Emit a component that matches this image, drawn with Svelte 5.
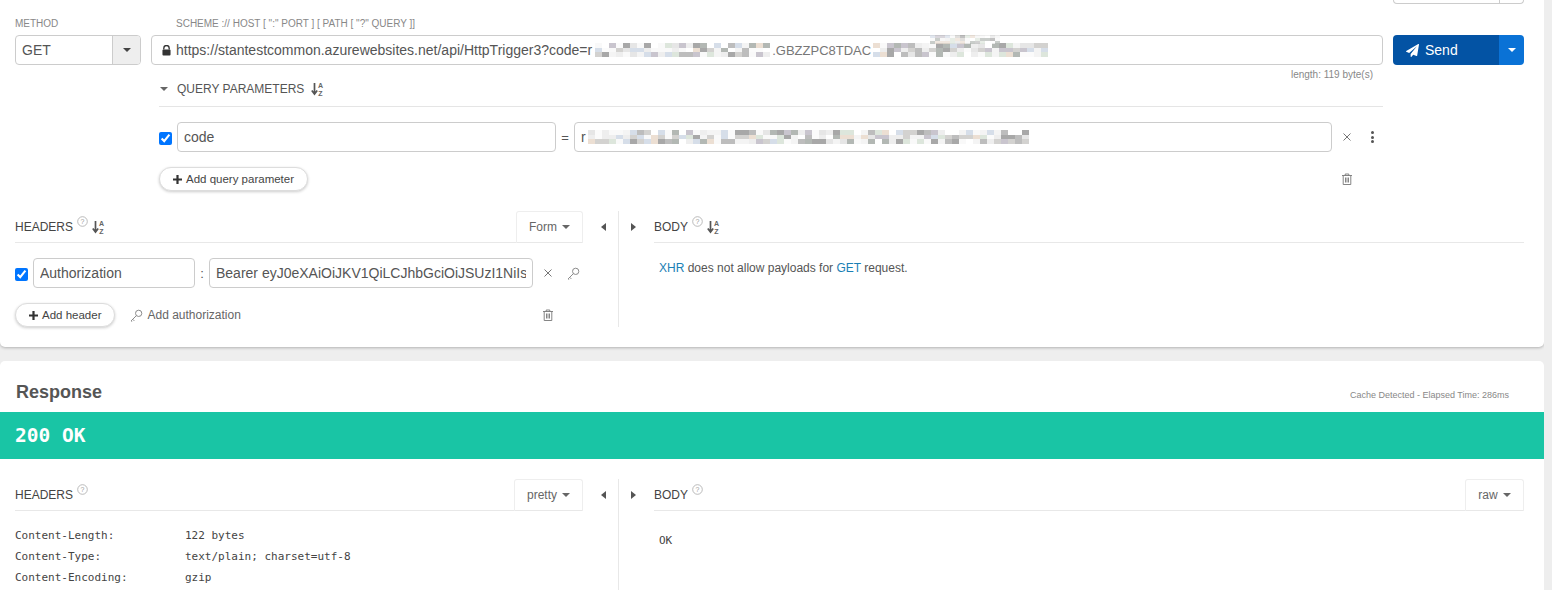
<script lang="ts">
	const palette = ['#ffffff', '#f4f4f4', '#e6e6e6', '#d3d2d0', '#bdbdbd', '#a8a8a8', '#ecdfd3', '#d6dee9', '#dde6dc', '#c9c5ce', '#f9f9f9', '#b3b8b4', '#fbfbfb', '#eeeeee'];

	// fake mosaic for the redacted secret, seeded so every render is the same
	function mosaic(seed: number, columns: number) {
		const cells: string[] = [];
		let n = seed;
		for (let i = 0; i < columns * 3; i++) {
			n = (n * 1103515245 + 12345) % 2147483648;
			cells.push(palette[Math.floor((n / 2147483648) * palette.length)]);
		}
		return cells;
	}

	const headerRows = [
		['Content-Length:', '122 bytes'],
		['Content-Type:', 'text/plain; charset=utf-8'],
		['Content-Encoding:', 'gzip']
	];
</script>

{#snippet caret()}
	<svg class="caret" viewBox="0 0 8 4" width="8" height="4"><path d="M0 0h8L4 4z" fill="currentColor" /></svg>
{/snippet}

{#snippet sortIcon()}
	<svg class="sort" viewBox="0 0 13 14" width="13" height="14">
		<path d="M3.5 1v10M.8 8.5l2.7 3.5 2.7-3.5" fill="none" stroke="#555" stroke-width="1.7" />
		<text x="7" y="6" font-size="7" font-weight="bold" fill="#666" font-family="Liberation Sans">A</text>
		<text x="7.3" y="13.5" font-size="7" font-weight="bold" fill="#666" font-family="Liberation Sans">Z</text>
	</svg>
{/snippet}

{#snippet helpIcon()}
	<svg class="help" viewBox="0 0 11 11" width="11" height="11">
		<circle cx="5.5" cy="5.5" r="4.8" fill="none" stroke="#aaa" stroke-width="0.8" />
		<text x="5.5" y="8" font-size="7" text-anchor="middle" fill="#999" font-family="Liberation Sans">?</text>
	</svg>
{/snippet}

{#snippet closeIcon()}
	<svg viewBox="0 0 8 8" width="8" height="8"><path d="M.5.5l7 7M7.5.5l-7 7" stroke="#666" stroke-width="0.9" /></svg>
{/snippet}

{#snippet trashIcon()}
	<svg viewBox="0 0 10 12" width="10" height="12">
		<path d="M0 2.5h10M3.2 2.5V1h3.6v1.5M1.2 2.5v9h7.6v-9M3.5 4.5v5M5 4.5v5M6.5 4.5v5" fill="none" stroke="#777" stroke-width="0.9" />
	</svg>
{/snippet}

{#snippet keyIcon()}
	<svg viewBox="0 0 12 12" width="13" height="13">
		<circle cx="8" cy="4" r="2.9" fill="none" stroke="#888" stroke-width="0.9" />
		<path d="M6 6L1 11M2.5 9.5L4 11M1 11l1 .5" fill="none" stroke="#888" stroke-width="0.9" />
	</svg>
{/snippet}

{#snippet arrows()}
	<div class="arrows">
		<div class="arrow-cell">
			<svg viewBox="0 0 5 8" width="5" height="8"><path d="M5 0v8L0 4z" fill="#555" /></svg>
		</div>
		<div class="arrow-cell">
			<svg viewBox="0 0 5 8" width="5" height="8"><path d="M0 0v8l5-4z" fill="#555" /></svg>
		</div>
	</div>
{/snippet}

{#snippet strip(seed: number, columns: number, extra = '')}
	<span class="strip {extra}">
		{#each mosaic(seed, columns) as colour}
			<i style="background:{colour}"></i>
		{/each}
	</span>
{/snippet}

<div class="page">
	<section class="card request">
		<div class="stub"><span></span></div>

		<div class="url-grid">
			<div class="label">METHOD</div>
			<div class="label scheme">SCHEME :// HOST [ ":" PORT ] [ PATH [ "?" QUERY ]]</div>
			<div></div>

			<div class="method">
				<span class="method-name">GET</span>
				<span class="method-caret">{@render caret()}</span>
			</div>
			<div class="field url">
				<svg class="lock" viewBox="0 0 10 12" width="9" height="11">
					<path d="M2 5V3.4a3 3 0 0 1 6 0V5" fill="none" stroke="#333" stroke-width="1.5" />
					<rect x="0.5" y="5" width="9" height="6.5" rx="1" fill="#333" />
				</svg>
				<span class="url-text">https://stantestcommon.azurewebsites.net/api/HttpTrigger3?code=r</span>
				{@render strip(17, 25)}
				<span class="leak">.GBZZPC8TDAC</span>
				{@render strip(431, 25)}
			</div>
			<div class="send">
				<span class="send-main">
					<svg viewBox="0 0 1792 1792" width="13" height="13"><path fill="#fff" d="M1764 11q33 24 27 64l-256 1536q-5 29-32 45-14 8-31 8-11 0-24-5l-453-185-242 295q-18 23-49 23-13 0-22-4-19-7-30.5-23.5t-11.5-36.5v-349l864-1059-1069 925-395-162q-37-14-40-55-2-40 32-59l1664-960q15-9 32-9 20 0 36 11z" /></svg>
					Send
				</span>
				<span class="send-caret">{@render caret()}</span>
			</div>

			<div></div>
			<div class="url-details">
				<div class="length">length: 119 byte(s)</div>
				<div class="query">
					<div class="query-title">
						{@render caret()}
						<span>QUERY PARAMETERS</span>
						{@render sortIcon()}
					</div>
					<div class="query-row">
						<input type="checkbox" checked />
						<input class="field name" value="code" />
						<span class="sep">=</span>
						<div class="field value">
							<span>r</span>
							{@render strip(913, 63)}
						</div>
						<span class="act close">{@render closeIcon()}</span>
						<span class="act dots"><i></i><i></i><i></i></span>
					</div>
					<div class="add-row">
						<button class="pill">
							<svg viewBox="0 0 9 9" width="9" height="9"><path d="M4.5 0v9M0 4.5h9" stroke="#333" stroke-width="2.2" /></svg>
							Add query parameter
						</button>
						<span class="query-trash">{@render trashIcon()}</span>
					</div>
				</div>
			</div>

			<div class="smudge">{@render strip(77, 14, 'thin')}</div>
		</div>

		<div class="split">
			<div class="pane">
				<div class="pane-head">
					<span class="pane-title">HEADERS</span>
					{@render helpIcon()}
					{@render sortIcon()}
					<span class="tab form">Form {@render caret()}</span>
				</div>
				<div class="header-row">
					<input type="checkbox" checked />
					<input class="field hname" value="Authorization" />
					<span class="colon">:</span>
					<input class="field hvalue" value="Bearer eyJ0eXAiOiJKV1QiLCJhbGciOiJSUzI1NiIsImtpZCI6IjE" />
					<span class="act hclose">{@render closeIcon()}</span>
					<span class="act hkey">{@render keyIcon()}</span>
				</div>
				<div class="add-row header-add">
					<button class="pill">
						<svg viewBox="0 0 9 9" width="9" height="9"><path d="M4.5 0v9M0 4.5h9" stroke="#333" stroke-width="2.2" /></svg>
						Add header
					</button>
					<span class="add-auth">{@render keyIcon()} Add authorization</span>
					<span class="header-trash">{@render trashIcon()}</span>
				</div>
			</div>
			{@render arrows()}
			<div class="pane">
				<div class="pane-head">
					<span class="pane-title">BODY</span>
					{@render helpIcon()}
					{@render sortIcon()}
				</div>
				<p class="xhr"><b>XHR</b> does not allow payloads for <b>GET</b> request.</p>
			</div>
		</div>
	</section>

	<section class="card response">
		<div class="response-head">
			<h2>Response</h2>
			<span class="elapsed">Cache Detected - Elapsed Time: 286ms</span>
		</div>
		<div class="status">200 OK</div>
		<div class="split response-split">
			<div class="pane">
				<div class="pane-head">
					<span class="pane-title">HEADERS</span>
					{@render helpIcon()}
					<span class="tab pretty">pretty {@render caret()}</span>
				</div>
				<div class="header-list">
					{#each headerRows as row}
						<div class="header-line"><span>{row[0]}</span><span>{row[1]}</span></div>
					{/each}
				</div>
			</div>
			{@render arrows()}
			<div class="pane">
				<div class="pane-head">
					<span class="pane-title">BODY</span>
					{@render helpIcon()}
					<span class="tab raw">raw {@render caret()}</span>
				</div>
				<div class="raw-body">OK</div>
			</div>
		</div>
	</section>
</div>

<style>
	:global(body) {
		background: #eeeeee;
		overflow: hidden;
	}

	.page {
		width: 1544px;
		height: 590px;
		overflow: hidden;
		font-family: 'Liberation Sans', Arial, sans-serif;
		color: #555;
	}

	.card {
		background: #fff;
	}

	.request {
		height: 347px;
		box-sizing: border-box;
		padding: 0 20px 0 15px;
		border-radius: 0 0 5px 5px;
		box-shadow: 0 1px 3px rgba(0, 0, 0, 0.25);
	}

	.stub {
		display: flex;
		justify-content: flex-end;
		height: 4px;
	}

	.stub span {
		width: 131px;
		box-sizing: border-box;
		border: 1px solid #ccc;
		border-top: 0;
		border-radius: 0 0 4px 4px;
		background: linear-gradient(to right, transparent 105px, #ccc 105px, #ccc 106px, transparent 106px);
	}

	.url-grid {
		position: relative;
		display: grid;
		grid-template-columns: 126px 1232px 131px;
		column-gap: 10px;
		margin-top: 14px;
	}

	.label {
		font-size: 10px;
		line-height: 12px;
		margin-bottom: 5px;
		color: #888;
	}

	.scheme {
		padding-left: 25px;
	}

	.method {
		height: 30px;
		box-sizing: border-box;
		display: flex;
		border: 1px solid #ccc;
		border-radius: 4px;
		font-size: 14px;
		overflow: hidden;
	}

	.method-name {
		flex: 1;
		padding-left: 6px;
		line-height: 28px;
	}

	.method-caret {
		width: 27px;
		background: #eee;
		border-left: 1px solid #ccc;
		display: flex;
		align-items: center;
		justify-content: center;
		color: #444;
	}

	.field {
		height: 30px;
		box-sizing: border-box;
		border: 1px solid #ccc;
		border-radius: 4px;
		padding: 0 6px;
		margin: 0;
		font: 14px 'Liberation Sans', Arial, sans-serif;
		color: #555;
		background: #fff;
		outline: none;
		overflow: hidden;
		white-space: nowrap;
	}

	div.field {
		display: flex;
		align-items: center;
	}

	.url {
		padding-left: 10px;
	}

	.lock {
		margin-right: 5px;
		flex: none;
	}

	.strip {
		display: inline-grid;
		grid-template-rows: repeat(3, 4.5px);
		grid-auto-columns: 7px;
		grid-auto-flow: column;
		flex: none;
		margin-left: 3px;
	}

	.strip i {
		display: block;
	}

	.strip.thin {
		grid-template-rows: repeat(3, 3px);
		grid-auto-columns: 5px;
		margin-left: 0;
	}

	/* compression smear that crosses the url box border */
	.smudge {
		position: absolute;
		left: 915px;
		top: 15px;
		opacity: 0.7;
		line-height: 0;
	}

	.leak {
		color: #777;
		font-size: 13px;
		margin-left: 2px;
		width: 98px;
		flex: none;
	}

	.send {
		height: 30px;
		display: flex;
		border-radius: 4px;
		overflow: hidden;
		color: #fff;
		font-size: 14px;
	}

	.send-main {
		width: 106px;
		box-sizing: border-box;
		padding-left: 13px;
		display: flex;
		align-items: center;
		gap: 6px;
		background: #0353a4;
	}

	.send-caret {
		flex: 1;
		background: #0a72d6;
		display: flex;
		align-items: center;
		justify-content: center;
	}

	.length {
		font-size: 10px;
		line-height: 12px;
		margin-top: 4px;
		padding-right: 10px;
		text-align: right;
		color: #888;
	}

	.query {
		margin-left: 8px;
	}

	.query-title {
		height: 26px;
		box-sizing: border-box;
		display: flex;
		align-items: flex-start;
		border-bottom: 1px solid #e5e5e5;
		font-size: 12px;
		line-height: 16px;
		color: #555;
	}

	.query-title .caret {
		margin: 6px 9px 0 1px;
		color: #666;
	}

	.query-title .sort {
		margin: 1px 0 0 7px;
	}

	.query-row {
		display: flex;
		align-items: center;
		margin-top: 15px;
	}

	input[type='checkbox'] {
		width: 13px;
		height: 13px;
		margin: 2px 5px 0 0;
		flex: none;
	}

	.name {
		width: 379px;
	}

	.sep {
		width: 18px;
		text-align: center;
		font-size: 13px;
	}

	.value {
		width: 758px;
	}

	.value span:first-child {
		width: 4px;
	}

	.act {
		display: flex;
		align-items: center;
		justify-content: center;
	}

	.close {
		width: 30px;
	}

	.dots {
		width: 20px;
		flex-direction: column;
		gap: 1.5px;
	}

	.dots i {
		width: 3px;
		height: 3px;
		border-radius: 50%;
		background: #555;
	}

	.add-row {
		display: flex;
		align-items: center;
		justify-content: space-between;
		margin-top: 15px;
	}

	.pill {
		height: 24px;
		padding: 0 13px;
		display: flex;
		align-items: center;
		gap: 4px;
		background: #fff;
		border: 1px solid #ddd;
		border-radius: 12px;
		box-shadow: 0 1px 3px rgba(0, 0, 0, 0.2);
		font: 11.5px 'Liberation Sans', Arial, sans-serif;
		color: #444;
	}

	.query-trash {
		display: flex;
		margin-right: 31px;
	}

	.split {
		display: grid;
		grid-template-columns: 568px 71px 870px;
		height: 116px;
		margin-top: 20px;
	}

	.pane {
		min-width: 0;
	}

	.pane-head {
		height: 32px;
		box-sizing: border-box;
		display: flex;
		align-items: center;
		border-bottom: 1px solid #e8e8e8;
		font-size: 12px;
		color: #444;
	}

	.pane-title {
		margin-right: 4px;
	}

	.help {
		margin: -10px 4px 0 0;
	}

	.tab {
		margin-left: auto;
		height: 32px;
		box-sizing: border-box;
		display: flex;
		align-items: center;
		justify-content: center;
		gap: 5px;
		border: 1px solid #eee;
		border-bottom: 0;
		border-radius: 3px 3px 0 0;
		color: #666;
	}

	.form {
		width: 67px;
	}

	.pretty {
		width: 69px;
	}

	.raw {
		width: 59px;
	}

	.arrows {
		display: grid;
		grid-template-columns: 36px 35px;
	}

	.arrow-cell {
		display: flex;
		padding: 12px 0 0 12px;
	}

	.arrow-cell:first-child {
		box-sizing: border-box;
		justify-content: flex-end;
		padding: 12px 12px 0 0;
		border-right: 1px solid #e8e8e8;
	}

	.header-row {
		display: flex;
		align-items: center;
		margin-top: 15px;
	}

	.hname {
		width: 162px;
	}

	.colon {
		width: 14px;
		text-align: center;
		font-size: 13px;
	}

	.hvalue {
		width: 324px;
	}

	.hclose {
		width: 30px;
	}

	.hkey {
		width: 20px;
	}

	.header-add {
		justify-content: flex-start;
	}

	.add-auth {
		display: flex;
		align-items: center;
		gap: 4px;
		margin-left: 15px;
		font-size: 12px;
		color: #666;
	}

	.header-trash {
		display: flex;
		margin-left: auto;
		margin-right: 30px;
	}

	.xhr {
		margin: 17px 0 0 5px;
		font-size: 12px;
		line-height: 16px;
		color: #555;
	}

	.xhr b {
		font-weight: normal;
		color: #1b7fb5;
	}

	.response {
		height: 229px;
		margin-top: 14px;
		border-radius: 5px 5px 0 0;
	}

	.response-head {
		height: 51px;
		box-sizing: border-box;
		display: flex;
		justify-content: space-between;
		align-items: flex-end;
		padding: 0 35px 10px 16px;
	}

	.response-head h2 {
		margin: 0;
		font-size: 18px;
		line-height: 20px;
		color: #555;
	}

	.elapsed {
		font-size: 9px;
		line-height: 12px;
		margin-bottom: 1px;
		color: #888;
	}

	.status {
		height: 47px;
		padding-left: 15px;
		background: #19c5a5;
		color: #fff;
		font: bold 19.5px/47px 'DejaVu Sans Mono', monospace;
	}

	.response-split {
		height: 111px;
		padding: 0 20px 0 15px;
	}

	.header-list {
		padding-top: 14px;
		font: 11px/21px 'DejaVu Sans Mono', monospace;
		color: #444;
	}

	.header-line {
		display: grid;
		grid-template-columns: 170px 1fr;
	}

	.raw-body {
		margin: 21px 0 0 5px;
		font: 11px/18px 'DejaVu Sans Mono', monospace;
		color: #444;
	}
</style>
